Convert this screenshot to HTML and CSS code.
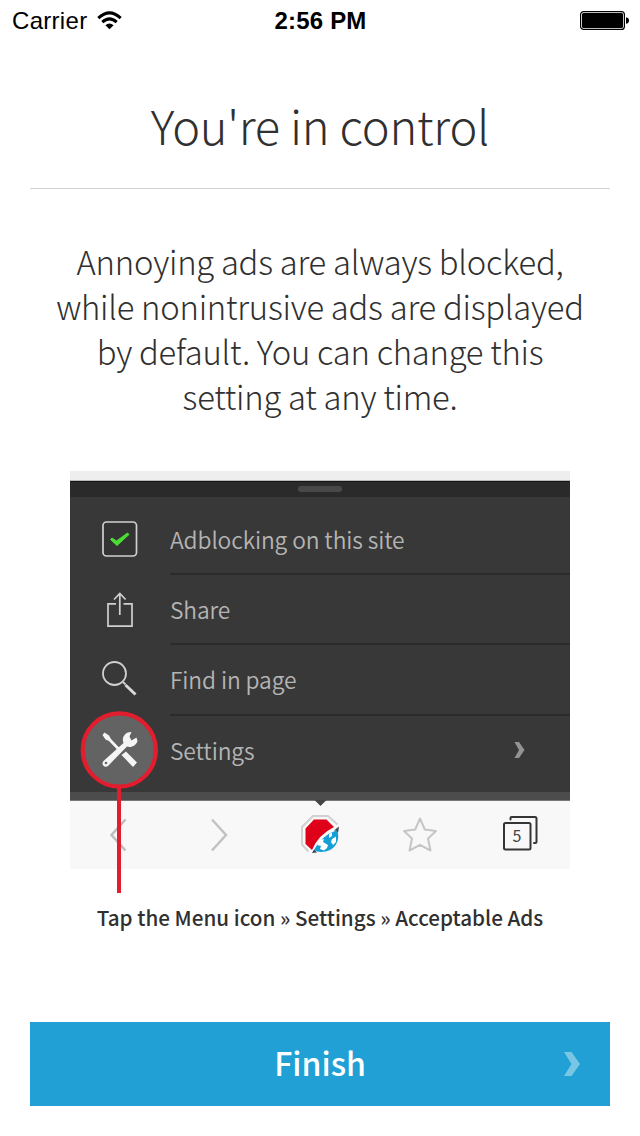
FILE: index.html
```html
<!DOCTYPE html>
<html lang="en">
<head>
<meta charset="utf-8">
<title>You're in control</title>
<link rel="stylesheet" href="styles.css">
</head>
<body>
<div class="screen">
  <header class="status">
    <div class="carrier"><span>Carrier</span>
      <svg width="26" height="20" viewBox="0 0 26 20"><g fill="none" stroke="#000" stroke-width="3"><path d="M1.3 7.2Q12.5-3.6 23.7 7.2"/><path d="M5.3 11.2Q12.5 4.6 19.7 11.2"/></g><path d="M8.4 14.2Q12.5 10.8 16.6 14.2L12.5 18.3Z"/></svg>
    </div>
    <div class="clock">2:56 PM</div>
    <svg class="battery" width="50" height="20" viewBox="0 0 50 20"><rect x=".6" y=".6" width="43.8" height="17.8" rx="3" fill="#fff" stroke="#000" stroke-width="1.2"/><rect x="2" y="2" width="41" height="15" rx="1.5"/><path d="M46 6.2Q49 6.7 49 9.5T46 12.8Z"/></svg>
  </header>
  <h1 class="title"><span>You're in control</span></h1>
  <p class="intro"><span>Annoying ads are always blocked,</span><span>while nonintrusive ads are displayed</span><span>by default. You can change this</span><span>setting at any time.</span></p>
  <section class="preview">
    <div class="page-edge"></div>
    <div class="handle-bar"><i class="handle"></i></div>
    <ul class="menu">
      <li><svg width="100" height="70" viewBox="0 0 100 70"><rect x="33" y="18" width="33.500" height="34" rx="3.5" fill="#333" stroke="#cfcfcf" stroke-width="1.7"/><path d="M40.500 35.500L42 34L46.500 37L57.500 29L59 30.500L47 41.500Z" fill="#4bdc36" stroke="#4bdc36" stroke-linejoin="round"/></svg><span class="label">Adblocking on this site</span></li>
      <li><svg width="100" height="70" viewBox="0 0 100 70"><g fill="none" stroke="#d0d0d0" stroke-width="1.7"><path d="M46 29.800H38V52.200H62V29.800H53.500M49.800 41V20M44 25.500L49.800 19.500L55.600 25.500"/></g></svg><span class="label">Share</span></li>
      <li><svg width="100" height="70" viewBox="0 0 100 70"><circle cx="44.500" cy="29.500" r="11.500" fill="none" stroke="#d0d0d0" stroke-width="1.8"/><path d="M53 38L55.500 40.500" stroke="#d0d0d0" stroke-width="2"/><path d="M55.500 41L65.500 50.500" stroke="#d8d8d8" stroke-width="3"/></svg><span class="label">Find in page</span></li>
      <li><span class="spacer"></span><span class="label last">Settings</span><svg class="more" width="12" height="18" viewBox="0 0 12 18"><path d="M.5 1H5L10.500 9L5 17H.5L5 9Z" fill="#949494"/></svg></li>
    </ul>
    <div class="menu-foot"></div>
    <nav class="toolbar">
      <svg viewBox="0 0 100 68"><path d="M55.500 18.500L41.500 34L55.500 49.500" fill="none" stroke="#bdbdbd" stroke-width="2.500"/></svg>
      <svg viewBox="0 0 100 68"><path d="M42 18.500L56 34L42 49.500" fill="none" stroke="#c2c2c2" stroke-width="2.500"/></svg>
      <svg viewBox="0 0 100 68"><path d="M44.500 -1H56.500L50.500 5Z" fill="#444"/><path d="M38.500 50.500L32 43.500V26L43 15H58L67.500 23.500" fill="none" stroke="#d1d1d1" stroke-width="2"/><path d="M44 18.500H56.500L64 26Q48 34 42 49L35.500 43V27.500Z" fill="#df0019"/><path d="M67 29C71 39 65 51 51 51C48 51 46 50 44 49Q51 35 67 29Z" fill="#149fd6"/><path d="M50 39L54 38L53 41L58 44L57 47L54 49.500L50 48L51 45L47 44ZM59 33L62 31.500L62 35L59 37ZM62 38L66 35.500L66 41L63 44L61 41Z" fill="#fff"/><path d="M64 29.500L69 25.500L68 32L66.500 29.500ZM44 48.500L47 51.500L42 52Z" fill="#3b4349"/></svg>
      <svg viewBox="0 0 100 68"><path d="M50 17.500L54.800 28.500L66 30L58 37.500L60.500 49.500L50 43.800L39.500 49.500L42 37.500L34 30L45.200 28.500Z" fill="none" stroke="#c6c6c6" stroke-width="2" stroke-linejoin="round"/></svg>
      <svg viewBox="0 0 100 68"><g fill="none" stroke="#353535" stroke-width="2" stroke-linecap="round"><rect x="34" y="22" width="26.500" height="26.500" rx="1.500"/><path d="M40.500 18.500V17Q40.500 16 41.500 16H65Q66.500 16 66.500 17.500V40.500Q66.500 42 65 42H64"/></g><text class="tab-count" x="47" y="40.500" text-anchor="middle">5</text></svg>
    </nav>
    <svg class="callout" width="80" height="184" viewBox="0 0 80 184"><path d="M39 76V183" stroke="#e11d2e" stroke-width="4"/><circle cx="39.300" cy="40" r="36.600" fill="#636363" stroke="#e11d2e" stroke-width="4.200"/><g fill="#f5f5f5"><path d="M24.500 22.500L29 25.500L31 29L41 39.500L39 41.500L29 31L25.500 29.500L22.500 25ZM41.500 45L46 41.500L57 52.500L53 57Z"/><path d="M43.500 33C41 27 46 21.500 51.500 22L49.500 26.500L51.500 30.500L56.500 27.500L57.500 31C56 36 51 38 47 36.500L28.500 55.500C25 59 20.500 54.500 23.500 51Z"/></g><circle cx="26" cy="53" r="1.300" fill="#666"/></svg>
  </section>
  <p class="caption"><span>Tap the Menu icon » Settings » Acceptable Ads</span></p>
  <button class="finish"><span>Finish</span><svg width="18" height="26" viewBox="0 0 18 26"><path d="M1 1H8.500L17 13L8.500 25H1L8.500 13Z" fill="#79c6e4"/></svg></button>
</div>
</body>
</html>
```
FILE: styles.css
```css
* { box-sizing: border-box; }
body { margin: 0; background: #fff; }
.screen { width: 640px; height: 1136px; display: flex; flex-direction: column; color: #303030; font-family: "Noto Sans CJK SC", "Open Sans", sans-serif; }
svg { display: block; flex-shrink: 0; }
.status { height: 40px; padding: 1px 11px 0 12px; display: grid; grid-template-columns: 1fr auto 1fr; align-items: center; color: #000; font: 24px/40px "Liberation Sans", sans-serif; }
.carrier { display: flex; align-items: center; gap: 10px; letter-spacing: .3px; }
.clock { font-weight: bold; letter-spacing: .2px; }
.battery { justify-self: end; margin-right: -1px; }
.title { height: 149px; margin: 0 30px; padding-top: 50px; border-bottom: 1px solid #d2d2d2; text-align: center; font-size: 47px; line-height: 70px; font-weight: 250; letter-spacing: -.25px; }
.intro { margin: 49px 0 0; display: flex; flex-direction: column; align-items: center; font-size: 32.8px; line-height: 45px; font-weight: 250; letter-spacing: -.25px; white-space: nowrap; }
.preview { position: relative; width: 500px; height: 398px; margin: 53px 0 0 70px; background: #383838; }
.page-edge { height: 10px; background: #eee; border-bottom: 1px solid #b6bab9; }
.handle-bar { height: 16px; padding-bottom: 1px; background: #2a2a2a; border-top: 1px solid #151515; display: flex; justify-content: center; align-items: center; }
.handle { width: 44px; height: 6px; border-radius: 3px; background: #484848; }
.menu { list-style: none; margin: 0; padding: 7.500px 0 0; height: 295px; color: #b4b4b4; font-size: 22.800px; font-weight: 350; letter-spacing: -.12px; }
.menu li { height: 70.400px; display: flex; align-items: center; }
.menu li > svg { margin-top: -2px; }
.label { flex: 1; height: 100%; line-height: 70px; border-bottom: 2px solid #2b2b2b; }
.last { border: 0; flex: 0 0 344px; }
.spacer { width: 100px; }
.menu-foot { height: 9px; background: #4c4c4c; border-bottom: 1px solid #777; }
.toolbar { height: 68px; display: grid; grid-template-columns: repeat(5, 100px); background: #f8f8f8; }
.toolbar svg { overflow: visible; }
.tab-count { font-size: 16px; font-family: "Noto Sans CJK SC", sans-serif; fill: #444; }
.callout { position: absolute; left: 10px; top: 239px; }
.caption { margin: 29px 0 0; height: 39px; line-height: 38px; text-align: center; font-size: 20.650px; font-weight: 500; white-space: nowrap; }
.finish { margin: 85px 30px 0; height: 84px; padding: 0 29px 0 0; border: 0; background: #20a0d5; color: #fff; display: grid; grid-template-columns: 47px 1fr 18px; align-items: center; font: 500 32px/80px "Noto Sans CJK SC", sans-serif; }
.finish span { grid-column: 2; height: 84px; }
```
